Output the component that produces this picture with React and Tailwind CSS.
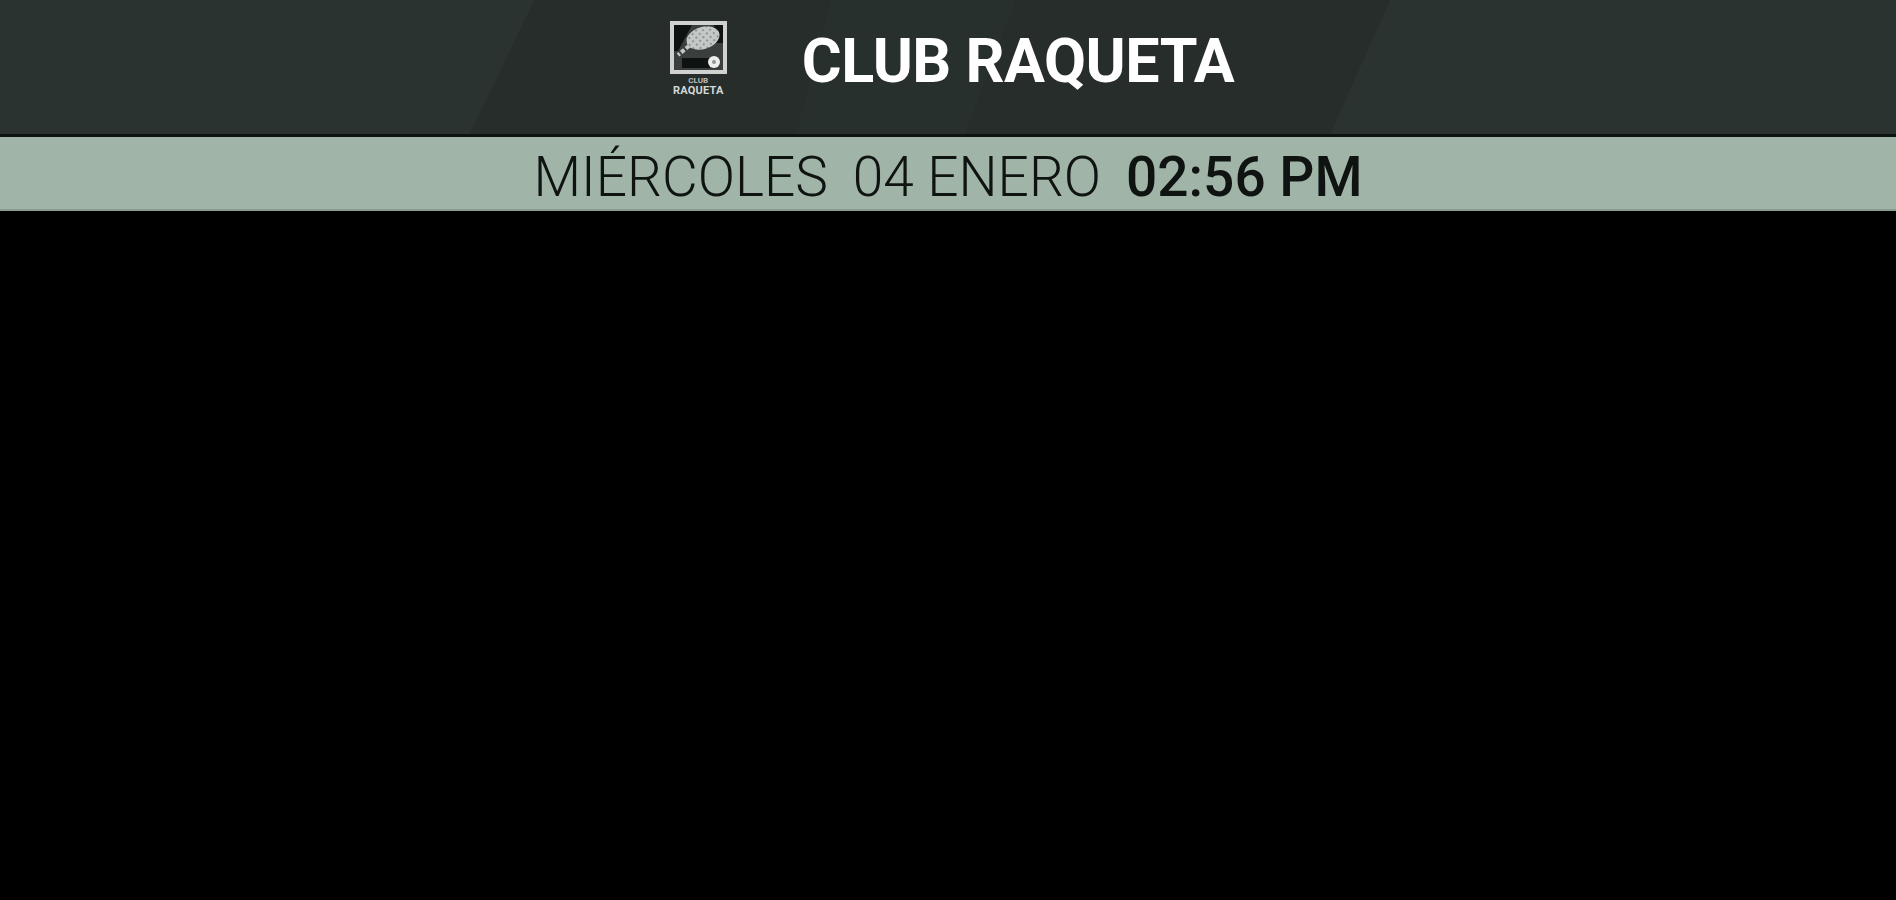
import React from 'react';

// Small club logo: framed racket with ball and two tiny lines of text under it
const ClubLogo = () => (
  <div className="flex flex-col items-center w-[57px]">
    <svg width="57" height="53" viewBox="0 0 57 53" className="block">
      <defs>
        <pattern id="strings" width="5" height="5" patternUnits="userSpaceOnUse" patternTransform="rotate(-30)">
          <rect width="5" height="5" fill="#c4c8c6" />
          <rect width="2" height="2" fill="#8f9593" />
        </pattern>
      </defs>
      <rect x="2" y="2" width="53" height="49" fill="#3a3f3d" stroke="#cfd2d1" strokeWidth="4" />
      <path d="M4 4 H22 L8 30 H4 Z" fill="#0e1211" />
      <path d="M44 4 H53 V22 H46 Z" fill="#0e1211" />
      <ellipse cx="33" cy="17" rx="17" ry="11" transform="rotate(-18 33 17)" fill="url(#strings)" />
      <path d="M19 25 L8 34" stroke="#c4c8c6" strokeWidth="4" strokeDasharray="4 2" />
      <path d="M12 37 H40 V47 H12 Z" fill="#0e1211" />
      <circle cx="44" cy="41" r="6" fill="#eceeed" />
      <circle cx="44" cy="41" r="2" fill="#8f9593" />
    </svg>
    <div className="mt-[2px] text-[8px] leading-[9px] font-bold text-[#b9bcbb]">CLUB</div>
    <div className="text-[11px] leading-[11px] font-bold text-[#d4d7d6] tracking-[0.2px]">RAQUETA</div>
  </div>
);

export default function App() {
  return (
    <div className="min-h-screen bg-black" style={{ fontFamily: 'Roboto, sans-serif' }}>
      {/* Header */}
      <div className="relative h-[134px] overflow-hidden bg-[#2a3330]">
        <div className="absolute inset-y-0 left-[470px] w-[920px] bg-[#262d2b] [clip-path:polygon(7%_0,100%_0,93.5%_100%,0_100%)]" />
        {/* faint stripes in the middle part */}
        <div className="absolute inset-y-0 left-[796px] w-[220px] bg-[#28302d] [clip-path:polygon(16%_0,100%_0,77%_100%,0_100%)]" />
        <div className="relative flex h-full items-center justify-center pl-[8px] pb-[18px] gap-[75px]">
          <ClubLogo />
          <div className="pt-[6px] text-[61px] leading-none font-bold text-white tracking-[-0.5px]">CLUB RAQUETA</div>
        </div>
      </div>

      {/* Date band */}
      <div className="h-[3px] bg-[#0d1311]" />
      <div className="flex h-[74px] items-center justify-center gap-[25px] bg-[#a0b5a7] pt-[9px] text-[55px] leading-none text-[#0f1412] border-b-2 border-[#8a9c90]">
        <span className="font-light">MIÉRCOLES</span>
        <span className="font-light">04 ENERO</span>
        <span className="font-medium">02:56 PM</span>
      </div>
    </div>
  );
}
